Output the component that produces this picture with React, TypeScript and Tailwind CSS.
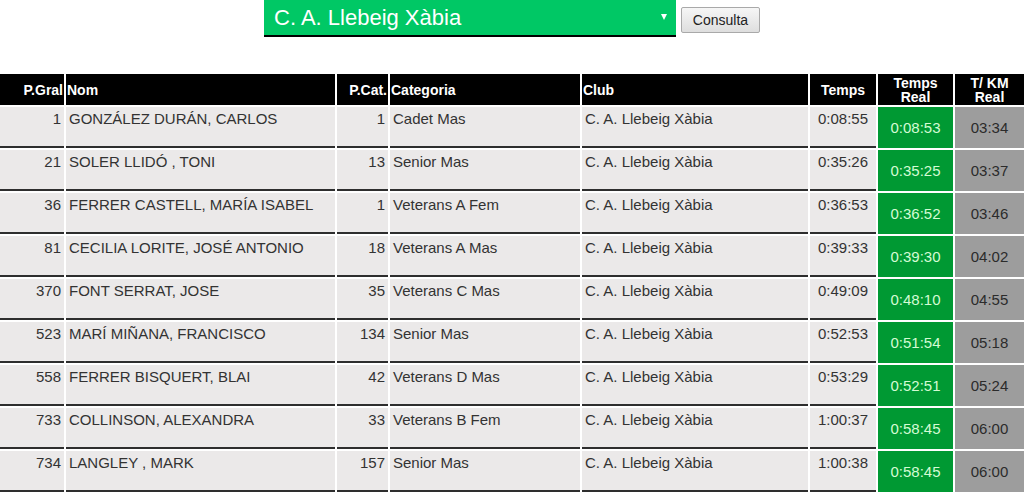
import { useState } from 'react'

const rows = [
  ['1', 'GONZÁLEZ DURÁN, CARLOS', '1', 'Cadet Mas', '0:08:55', '0:08:53', '03:34'],
  ['21', 'SOLER LLIDÓ , TONI', '13', 'Senior Mas', '0:35:26', '0:35:25', '03:37'],
  ['36', 'FERRER CASTELL, MARÍA ISABEL', '1', 'Veterans A Fem', '0:36:53', '0:36:52', '03:46'],
  ['81', 'CECILIA LORITE, JOSÉ ANTONIO', '18', 'Veterans A Mas', '0:39:33', '0:39:30', '04:02'],
  ['370', 'FONT SERRAT, JOSE', '35', 'Veterans C Mas', '0:49:09', '0:48:10', '04:55'],
  ['523', 'MARÍ MIÑANA, FRANCISCO', '134', 'Senior Mas', '0:52:53', '0:51:54', '05:18'],
  ['558', 'FERRER BISQUERT, BLAI', '42', 'Veterans D Mas', '0:53:29', '0:52:51', '05:24'],
  ['733', 'COLLINSON, ALEXANDRA', '33', 'Veterans B Fem', '1:00:37', '0:58:45', '06:00'],
  ['734', 'LANGLEY , MARK', '157', 'Senior Mas', '1:00:38', '0:58:45', '06:00'],
]

const club = 'C. A. Llebeig Xàbia'

// celda normal: fondo gris claro con línea oscura abajo
const cell = 'bg-[#ebe9e9] border-b-2 border-[#2e2e2e] px-[3px] pt-[3px] leading-[17px] whitespace-pre'
const head = 'bg-black text-white font-bold text-[14px] leading-[14px] flex items-center px-[1px]'

export default function App() {
  const [sel, setSel] = useState(club)

  return (
    <div className="min-h-screen bg-white text-[#333] font-['Liberation_Sans',Arial,sans-serif]">
      <div className="flex justify-center items-start">
        <div className="relative w-[412px] h-[37px]">
          <select
            value={sel}
            onChange={(e) => setSel(e.target.value)}
            className="appearance-none w-full h-full bg-[#00c865] text-white text-[22px] pl-[10px] border-0 border-b-2 border-black outline-none font-['Liberation_Sans',Arial,sans-serif]"
          >
            <option value={club}>{club}</option>
          </select>
          <div className="absolute right-[9px] top-[14px] w-0 h-0 border-l-[3px] border-r-[3px] border-t-[6px] border-l-transparent border-r-transparent border-t-white pointer-events-none" />
        </div>
        <button className="ml-[5px] mt-[7px] h-[26px] w-[79px] text-[14px] text-[#222] bg-gradient-to-b from-[#f6f6f6] to-[#dedede] border border-[#a9a9a9] rounded-[2px]">
          Consulta
        </button>
      </div>

      <div className="mt-[37px] grid grid-cols-[64px_269px_51px_190px_226px_66px_75px_69px] gap-[2px] text-[15px]">
        <div className={`${head} h-[31px] justify-end`}>P.Gral</div>
        <div className={head}>Nom</div>
        <div className={`${head} justify-end`}>P.Cat.</div>
        <div className={head}>Categoria</div>
        <div className={head}>Club</div>
        <div className={`${head} justify-center`}>Temps</div>
        <div className={`${head} justify-center text-center`}>Temps<br />Real</div>
        <div className={`${head} justify-center text-center`}>T/ KM<br />Real</div>

        {rows.map((r, i) => (
          <div key={i} className="contents">
            <div className={`${cell} h-[41px] text-right`}>{r[0]}</div>
            <div className={cell}>{r[1]}</div>
            <div className={`${cell} text-right`}>{r[2]}</div>
            <div className={cell}>{r[3]}</div>
            <div className={cell}>{club}</div>
            <div className={`${cell} text-center`}>{r[4]}</div>
            <div className="h-[41px] bg-[#009933] text-[#d4fbd4] flex items-center justify-center pt-[1px]">{r[5]}</div>
            <div className="h-[41px] bg-[#9d9d9d] text-[#2b2b2b] flex items-center justify-center pt-[1px]">{r[6]}</div>
          </div>
        ))}
      </div>
    </div>
  )
}
